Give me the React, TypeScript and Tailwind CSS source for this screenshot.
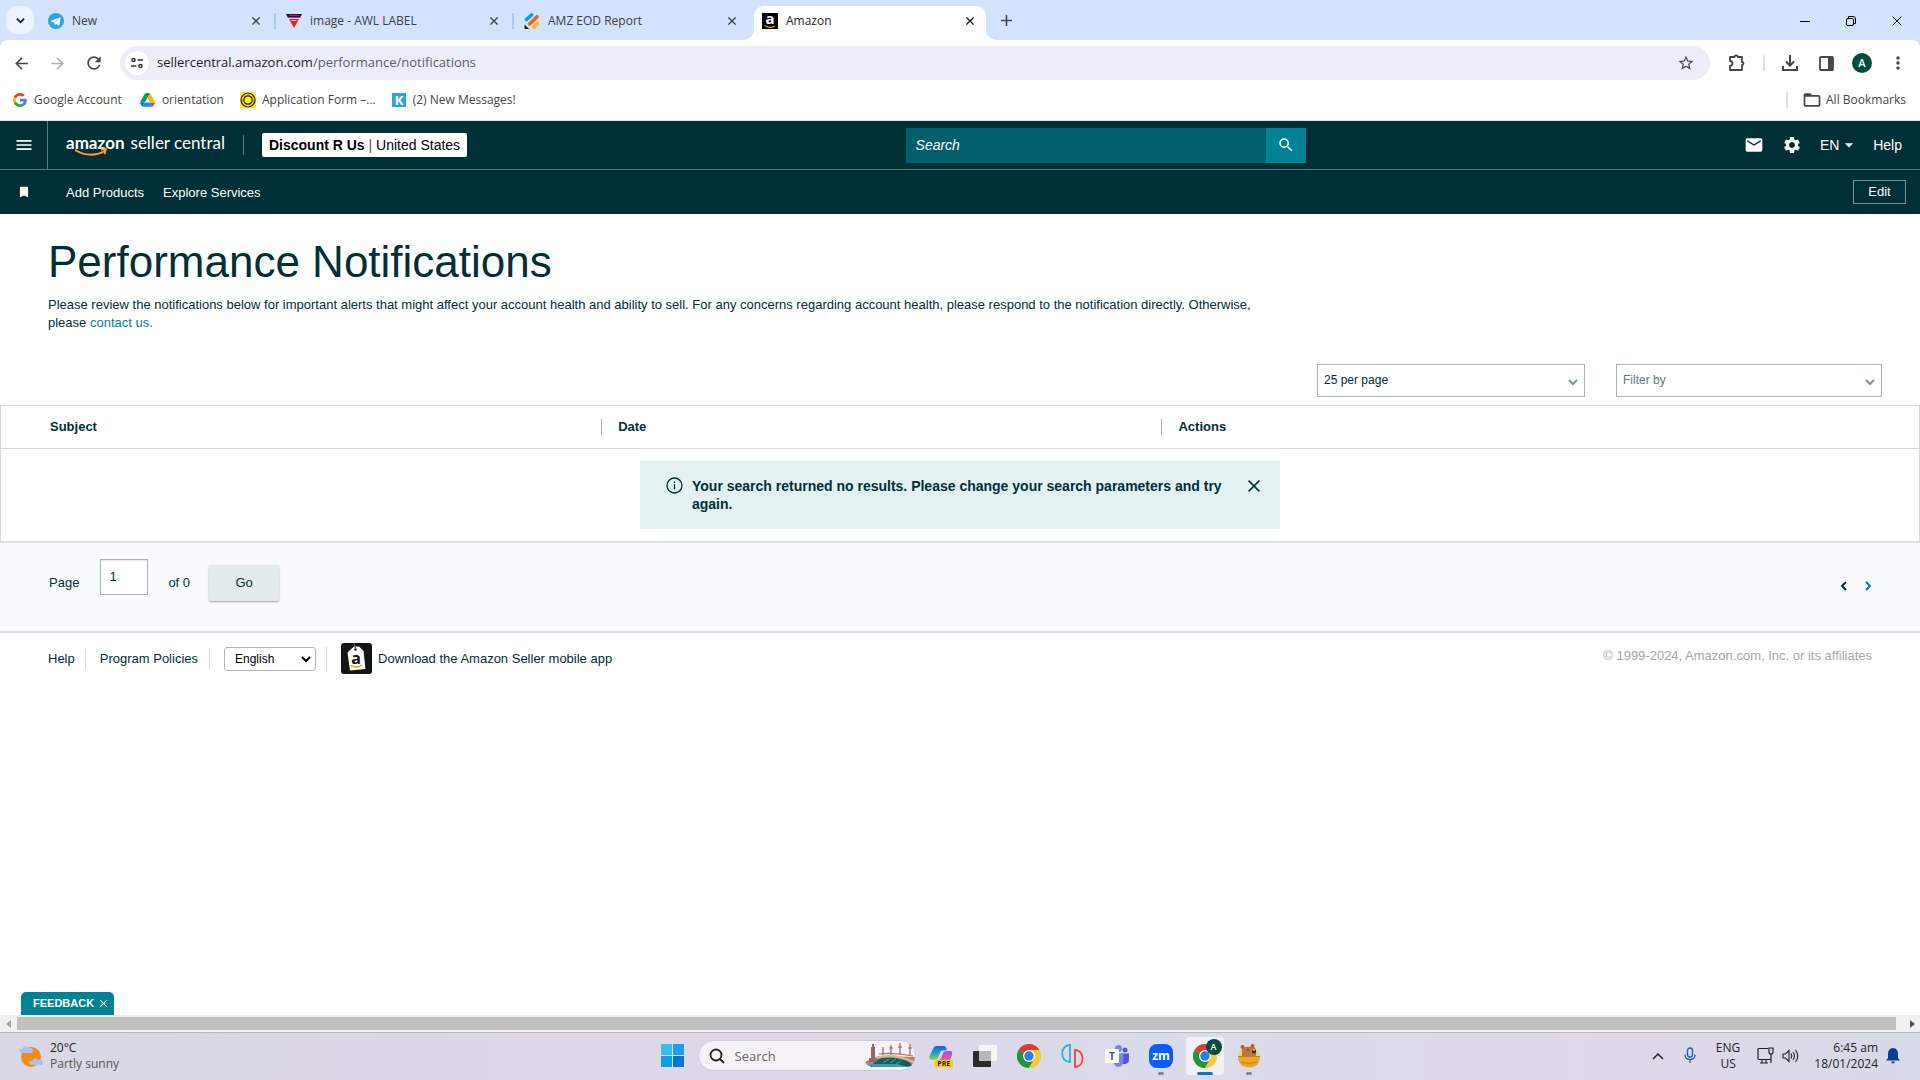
import React from "react";
import {
  MdArrowBack, MdArrowForward, MdRefresh, MdStarBorder, MdOutlineExtension, MdMenu,
  MdMail, MdSettings, MdBookmark, MdSearch, MdFolderOpen, MdMoreVert, MdArrowDropDown,
} from "react-icons/md";

const UI = "font-['Open_Sans','Noto_Sans',sans-serif]";

function Cross({ size = 8, width = 1.6 }: { size?: number; width?: number }) {
  return (
    <svg width={size} height={size} viewBox="0 0 10 10" stroke="currentColor" strokeWidth={width} fill="none">
      <path d="M0.5 0.5 9.5 9.5M9.5 0.5 0.5 9.5" />
    </svg>
  );
}

function Chevron({ className = "", d = "M1 3 5 7 9 3" }: { className?: string; d?: string }) {
  return (
    <svg className={className} width="10" height="10" viewBox="0 0 10 10" fill="none" stroke="currentColor" strokeWidth="2">
      <path d={d} />
    </svg>
  );
}

function TelegramIcon() {
  return (
    <svg width="16" height="16" viewBox="0 0 24 24">
      <circle cx="12" cy="12" r="12" fill="#2ca5e0" />
      <path d="M4.6 11.8 18 6.6c.7-.2 1.2.2 1 1.100l-2.200 10.500c-.2.8-.7 1-1.300.6l-3.500-2.600-1.700 1.700c-.3.3-.6.3-.7-.3l.2-3.100-4.900-1.600c-.7-.2-.7-.8-.3-1.100z" fill="#fff" />
      <path d="m10 14.200 6.200-5.500" stroke="#2ca5e0" strokeWidth="1" />
    </svg>
  );
}

function AwlIcon() {
  return (
    <svg width="16" height="16" viewBox="0 0 16 16">
      <path d="M0 1h16l-2 4H2z" fill="#2b1236" />
      <path d="M3 2.500h10" stroke="#c0205a" strokeWidth="1" />
      <path d="M3 6h10L8 15z" fill="#ec1c24" />
      <path d="M5.500 7.500h5" stroke="#fff" strokeWidth="0.800" />
      <path d="M1 5h14" stroke="#f4b8c0" strokeWidth="0.800" />
    </svg>
  );
}

function JotformIcon() {
  return (
    <svg width="16" height="16" viewBox="0 0 16 16" strokeLinecap="round" fill="none">
      <path d="M2.500 6.500 7.500 2" stroke="#0099ff" strokeWidth="3.600" />
      <path d="M5.500 11 13 3.700" stroke="#ff6100" strokeWidth="3.600" />
      <path d="M10 14 13.700 10.600" stroke="#ffb629" strokeWidth="3.600" />
      <path d="M.5 11.500V15a1 1 0 0 0 1 1H5z" fill="#0a1551" />
    </svg>
  );
}

function AmazonIcon() {
  return (
    <svg className="overflow-visible" width="16" height="16" viewBox="0 0 16 16">
      <rect width="16" height="16" fill="#000" />
      <text x="8" y="11" textAnchor="middle" fontSize="15" fontWeight="700" fill="#fff" fontFamily="Open Sans, sans-serif">a</text>
      <path d="M2.500 12.600Q8 16 13 12.900" fill="none" stroke="#f90" strokeWidth="1.200" />
    </svg>
  );
}

function GoogleIcon() {
  return (
    <svg width="14" height="14" viewBox="0 0 48 48">
      <path fill="#EA4335" d="M24 9.500c3.540 0 6.710 1.220 9.210 3.600l6.850-6.850C35.900 2.380 30.470 0 24 0 14.620 0 6.510 5.380 2.560 13.220l7.980 6.190C12.430 13.720 17.740 9.500 24 9.500z" />
      <path fill="#4285F4" d="M46.980 24.550c0-1.570-.15-3.090-.38-4.550H24v9.020h12.940c-.58 2.960-2.260 5.480-4.780 7.180l7.730 6c4.510-4.180 7.090-10.360 7.090-17.650z" />
      <path fill="#FBBC05" d="M10.530 28.590c-.48-1.450-.76-2.990-.76-4.590s.27-3.140.76-4.590l-7.980-6.190C.92 16.460 0 20.120 0 24c0 3.880.92 7.540 2.560 10.780l7.970-6.190z" />
      <path fill="#34A853" d="M24 48c6.480 0 11.930-2.130 15.890-5.810l-7.730-6c-2.150 1.450-4.920 2.300-8.160 2.300-6.260 0-11.570-4.220-13.470-9.910l-7.980 6.190C6.510 42.620 14.620 48 24 48z" />
    </svg>
  );
}

function DriveIcon() {
  return (
    <svg width="15" height="14" viewBox="0 0 87 78">
      <path fill="#0066da" d="m6.600 66.850 3.850 6.650c.8 1.400 1.950 2.500 3.300 3.300l13.750-23.800H0c0 1.550.4 3.100 1.200 4.500z" />
      <path fill="#00ac47" d="M43.650 25 29.900 1.200c-1.350.8-2.500 1.900-3.300 3.300L1.200 48.500A9 9 0 0 0 0 53h27.500z" />
      <path fill="#ea4335" d="M73.550 76.800c1.350-.8 2.500-1.900 3.300-3.300l1.600-2.750 7.650-13.250c.8-1.400 1.200-2.950 1.200-4.500H59.800l5.850 11.500z" />
      <path fill="#00832d" d="M43.650 25 57.400 1.200C56.050.4 54.500 0 52.900 0H34.400c-1.600 0-3.150.45-4.500 1.200z" />
      <path fill="#2684fc" d="M59.800 53H27.500L13.750 76.800c1.350.8 2.900 1.200 4.500 1.200h50.800c1.600 0 3.150-.45 4.500-1.200z" />
      <path fill="#ffba00" d="M73.400 26.500 60.700 4.500c-.8-1.400-1.950-2.500-3.300-3.300L43.650 25 59.800 53h27.450c0-1.550-.4-3.100-1.200-4.500z" />
    </svg>
  );
}

function SealIcon() {
  return (
    <svg width="16" height="16" viewBox="0 0 16 16" fill="none">
      <rect width="16" height="16" fill="#fdf01c" />
      <circle cx="8" cy="8" r="7" stroke="#222" strokeWidth="1.200" />
      <circle cx="8" cy="8" r="4.200" stroke="#222" strokeWidth="1.200" />
      <circle cx="8" cy="8" r="5.600" stroke="#c97b3a" strokeWidth="0.800" strokeDasharray="3 2" />
    </svg>
  );
}

function KIcon() {
  return (
    <svg className="overflow-visible" width="14" height="14" viewBox="0 0 14 14">
      <rect width="14" height="14" fill="#2fa3dd" />
      <text x="7" y="12" textAnchor="middle" fontSize="13" fontWeight="700" fill="#fff" fontFamily="Open Sans, sans-serif">K</text>
    </svg>
  );
}

const tabs = [
  { title: "New", icon: <TelegramIcon />, active: false },
  { title: "image - AWL LABEL", icon: <AwlIcon />, active: false },
  { title: "AMZ EOD Report", icon: <JotformIcon />, active: false },
  { title: "Amazon", icon: <AmazonIcon />, active: true },
];

function TabStrip() {
  return (
    <div className="flex h-10 items-end bg-[#d3e3fd] pl-1.5 text-[12px] text-[#3c4043]">
      <button aria-label="Search tabs" className="mb-1.5 flex size-7 items-center justify-center rounded-[10px] bg-[#ecf2fe] text-[#1f1f1f]">
        <Chevron className="size-[9px]" />
      </button>
      <div role="tablist" className="ml-1.5 flex">
        {tabs.map((t, i) => (
          <div
            key={t.title}
            className={
              t.active
                ? "relative flex h-[34px] w-[232px] items-center rounded-t-[10px] bg-white pr-3 pl-2 text-[#1f1f1f]"
                : "flex h-[34px] w-[238px] items-center pr-0.5 pl-2"
            }
          >
            {t.active && (
              <>
                <svg className="absolute bottom-0 -left-[10px]" width="10" height="10" viewBox="0 0 10 10"><path d="M10 0v10H0A10 10 0 0 0 10 0z" fill="#fff" /></svg>
                <svg className="absolute -right-[10px] bottom-0" width="10" height="10" viewBox="0 0 10 10"><path d="M0 0v10h10A10 10 0 0 1 0 0z" fill="#fff" /></svg>
              </>
            )}
            <button role="tab" aria-selected={t.active} className="flex flex-1 items-center gap-2 pb-1 text-left">
              {t.icon}
              <span>{t.title}</span>
            </button>
            <button aria-label={`Close ${t.title}`} className={t.active ? "pb-1" : "pr-3.5 pb-1"}><Cross /></button>
            {!t.active && <span className={i < 2 ? "mb-1 h-4 w-0.5 bg-[#a8c7fa]" : "w-0.5"} />}
          </div>
        ))}
      </div>
      <button aria-label="New tab" className="mb-3.5 ml-[15px] text-[#474747]">
        <svg width="11" height="11" viewBox="0 0 11 11" stroke="currentColor" strokeWidth="1.600"><path d="M5.500 0v11M0 5.500h11" /></svg>
      </button>
      <div className="mb-3.5 ml-auto flex items-center gap-9 pr-[18px] text-black">
        <button aria-label="Minimize"><svg width="10" height="10" viewBox="0 0 10 10" stroke="currentColor"><path d="M0 5.500h10" /></svg></button>
        <button aria-label="Restore">
          <svg width="10" height="10" viewBox="0 0 10 10" fill="none" stroke="currentColor"><rect x="0.500" y="2.500" width="7" height="7" rx="1.500" /><path d="M2.500 2V.5H7A2.500 2.500 0 0 1 9.500 3v4.500H8" /></svg>
        </button>
        <button aria-label="Close window"><Cross size={10} width={1} /></button>
      </div>
    </div>
  );
}

function ExtensionIcon() {
  return (
    <svg width="18" height="18" viewBox="0 0 18 18" fill="none" stroke="currentColor" strokeWidth="1.800" strokeLinejoin="round">
      <path d="M2 3h4.500a1.600 1.600 0 0 1 3.200 0H14v5a1.500 1.500 0 0 1 0 3v5H2v-4q2.500-.3 2.500-2.500T2 7z" />
    </svg>
  );
}

function Toolbar() {
  return (
    <div className="bg-[#d3e3fd]">
      <div className="flex items-center rounded-t-[8px] bg-white pt-1.5 pr-3 pl-3 text-[#474747]">
        <button aria-label="Back"><MdArrowBack size={19} /></button>
        <button aria-label="Forward" className="ml-[17px] text-[#b0b0b0]"><MdArrowForward size={19} /></button>
        <button aria-label="Reload" className="ml-[17px]"><MdRefresh size={20} /></button>
        <div className="ml-4 flex h-[34px] flex-1 items-center rounded-full bg-[#ebeef8] pr-[15px] pl-[5px]">
          <button aria-label="Site information" className="flex size-6 items-center justify-center rounded-full bg-white">
            <svg width="12" height="12" viewBox="0 0 12 12" fill="none" stroke="#333" strokeWidth="1.500">
              <circle cx="2.500" cy="3" r="1.600" /><path d="M6.500 3H12M0 9h5.500" /><circle cx="9.500" cy="9" r="1.600" />
            </svg>
          </button>
          <div role="textbox" aria-label="Address" className="ml-2 flex-1 text-[13px] text-[#5a5e66]">
            <span className="text-[#1f1f1f]">sellercentral.amazon.com</span>/performance/notifications
          </div>
          <button aria-label="Bookmark this tab"><MdStarBorder size={18} /></button>
        </div>
        <button aria-label="Extensions" className="ml-[18px]"><ExtensionIcon /></button>
        <span className="mx-[17px] h-4 w-0.5 bg-[#d3e3fd]" />
        <button aria-label="Downloads">
          <svg width="16" height="16" viewBox="0 0 16 16" fill="none" stroke="currentColor" strokeWidth="2"><path d="M8 0v10M4 6.500 8 10.500 12 6.500M1 11v4h14v-4" /></svg>
        </button>
        <button aria-label="Side panel" className="ml-[21px]">
          <svg width="15" height="15" viewBox="0 0 15 15"><rect x="1" y="1" width="13" height="13" rx="1" fill="none" stroke="currentColor" strokeWidth="1.800" /><path d="M9 1h5v13H9z" fill="currentColor" /></svg>
        </button>
        <button aria-label="Profile" className="ml-[18px] flex size-5 items-center justify-center rounded-full bg-[#004d40] text-[11px] font-semibold text-white">A</button>
        <button aria-label="Menu" className="ml-4"><MdMoreVert size={20} /></button>
      </div>
    </div>
  );
}

function Bookmarks() {
  return (
    <nav aria-label="Bookmarks" className="flex h-[41px] items-center border-b border-[#dfe1e5] bg-white pr-3.5 pl-[13px] text-[12px] text-[#474747]">
      <a href="#google" className="flex items-center gap-[7px]"><GoogleIcon />Google Account</a>
      <a href="#orientation" className="ml-[18px] flex items-center gap-[7px]"><DriveIcon />orientation</a>
      <a href="#form" className="ml-4 flex items-center gap-1.5"><SealIcon />Application Form –...</a>
      <a href="#messages" className="ml-4 flex items-center gap-[7px]"><KIcon />(2) New Messages!</a>
      <span className="ml-auto h-4 w-0.5 bg-[#d3e3fd]" />
      <button className="ml-3.5 flex items-center gap-1"><MdFolderOpen size={20} />All Bookmarks</button>
    </nav>
  );
}

function SellerHeader() {
  return (
    <header className="bg-[#002f36] text-[14px] text-white">
      <div className="flex h-[49px] items-center border-b border-[#5e7a7e]">
        <button aria-label="Open menu" className="flex w-12 items-center justify-center self-stretch border-r border-[#5e7a7e]"><MdMenu size={20} /></button>
        <a href="#home" className="relative ml-[18px] flex items-baseline gap-1.5 pb-1 font-['Lato',sans-serif] text-[17px] leading-5">
          <span className="font-bold">amazon</span>
          <span>seller central</span>
          <svg className="absolute top-[15px] left-2" width="34" height="9" viewBox="0 0 34 9" fill="none" stroke="#ff9f2e" strokeWidth="1.800"><path d="M1 2Q16 11 31 3M27 1.500l5-.3-1.500 5" /></svg>
        </a>
        <span className="ml-[18px] h-5 w-px bg-[#5e7a7e]" />
        <button className="ml-[18px] h-6 rounded-[2px] bg-white px-[7px] text-black"><b>Discount R Us</b> <span className="text-[#555]">|</span> United States</button>
        <form className="mx-auto flex h-[35px] w-[400px]" onSubmit={(e) => e.preventDefault()}>
          <input aria-label="Search" placeholder="Search" className="min-w-0 flex-1 bg-[#005f6b] px-2.5 italic placeholder:text-white" />
          <button aria-label="Submit search" className="flex w-10 items-center justify-center bg-[#008296]"><MdSearch size={18} /></button>
        </form>
        <div className="flex w-[176px] items-center pr-[18px]">
          <button aria-label="Messages"><MdMail size={20} /></button>
          <button aria-label="Settings" className="ml-[18px]"><MdSettings size={20} /></button>
          <button className="ml-[18px] flex items-center">EN<MdArrowDropDown size={20} /></button>
          <a href="#help" className="ml-auto">Help</a>
        </div>
      </div>
      <div className="flex h-11 items-center pr-3.5 text-[13px]">
        <button aria-label="Bookmarks" className="flex w-12 justify-center"><MdBookmark size={14} /></button>
        <a href="#add" className="ml-[18px] pt-0.5 font-medium">Add Products</a>
        <a href="#explore" className="ml-[19px] pt-0.5 font-medium">Explore Services</a>
        <button className="ml-auto h-6 w-[53px] border border-[#7d9295]">Edit</button>
      </div>
    </header>
  );
}

function Filters() {
  return (
    <div className="mt-8 flex justify-end gap-[31px] pr-[38px] text-[12px]">
      <label className="relative w-[268px]">
        <select aria-label="Results per page" className="h-[33px] w-full appearance-none border border-[#a3b5b6] bg-white px-1.5 pb-0.5"><option>25 per page</option></select>
        <Chevron className="pointer-events-none absolute top-[13px] right-[7px] text-[#7f9495]" />
      </label>
      <label className="relative w-[266px]">
        <select aria-label="Filter by" className="h-[33px] w-full appearance-none border border-[#a3b5b6] bg-white px-1.5 pb-0.5 text-[#667779]"><option>Filter by</option></select>
        <Chevron className="pointer-events-none absolute top-[13px] right-[7px] text-[#7f9495]" />
      </label>
    </div>
  );
}

function Notifications() {
  return (
    <table className="mt-2 w-full border border-b-0 border-[#d5dbdb] text-[13px]">
      <thead>
        <tr className="h-[43px] border-b border-[#d5dbdb] text-left">
          <th className="w-[31.3%] pl-[49px]">Subject</th>
          <th className="w-[29.2%]"><div className="border-l border-[#a3b5b6] pl-4 leading-4">Date</div></th>
          <th><div className="border-l border-[#a3b5b6] pl-4 leading-4">Actions</div></th>
        </tr>
      </thead>
      <tbody>
        <tr>
          <td colSpan={3} className="py-3">
            <div role="status" className="mx-auto flex w-[640px] items-start bg-[#e3f1f3] pt-4 pr-[20px] pb-4 pl-[26px]">
              <svg className="shrink-0" width="17" height="17" viewBox="0 0 17 17" fill="none" stroke="#002f36" strokeWidth="1.300"><circle cx="8.500" cy="8.500" r="7.500" /><path d="M8.500 7.200v5M8.500 4.500v1.400" /></svg>
              <p className="ml-[9px] flex-1 text-[14px] leading-[18px] font-bold">Your search returned no results. Please change your search parameters and try again.</p>
              <button aria-label="Dismiss" className="mt-[3px]"><Cross size={12} width={1.300} /></button>
            </div>
          </td>
        </tr>
      </tbody>
    </table>
  );
}

function Pager() {
  return (
    <div className="flex items-center border-y-2 border-[#dbdfe3] bg-[#f9fafc] pt-4 pr-[47px] pb-7 pl-[49px] text-[13px]">
      <label htmlFor="page" className="pt-1">Page</label>
      <input id="page" defaultValue="1" className="mr-5 mb-2 ml-[21px] h-9 w-12 border border-[#a3b5b6] bg-white px-2 pb-0.5 shadow-[inset_0_1px_2px_rgba(0,0,0,0.1)]" />
      <span className="pt-1">of 0</span>
      <button className="mt-1 ml-[19px] h-9 w-[70px] rounded-[2px] bg-[#e3eaeb] shadow-[0_1px_2px_rgba(0,0,0,0.35)]">Go</button>
      <div className="ml-auto flex gap-3.5 pt-2.5">
        <button aria-label="Previous page"><Chevron d="M7 1 3 5 7 9" /></button>
        <button aria-label="Next page" className="text-[#008296]"><Chevron d="M3 1 7 5 3 9" /></button>
      </div>
    </div>
  );
}

function Footer() {
  return (
    <footer className="flex items-center pt-2.5 pr-12 pl-12 text-[13px]">
      <a href="#help">Help</a>
      <span className="ml-2.5 h-5 w-px bg-[#d5dbdb]" />
      <a href="#policies" className="ml-3.5">Program Policies</a>
      <span className="ml-[11px] h-5 w-px bg-[#d5dbdb]" />
      <label className="relative ml-3.5 w-[92px]">
        <select aria-label="Language" className="h-6 w-full appearance-none rounded-[3px] border border-[#b5b5b5] bg-white pl-2.5 text-[12px] text-black"><option>English</option></select>
        <Chevron className="pointer-events-none absolute top-[7px] right-[5px] text-black" />
      </label>
      <span className="ml-2.5 h-6 w-px bg-[#d5dbdb]" />
      <a href="#app" className="ml-3.5 flex items-center gap-1.5">
        <svg width="31" height="31" viewBox="0 0 31 31">
          <rect width="31" height="31" rx="3" fill="#151515" />
          <path d="m8 8 5-4.500h5L22.500 8l2 18L9 27.500 6.500 10z" fill="#fff" />
          <circle cx="14.500" cy="6.500" r="1.200" fill="#151515" />
          <path d="M14.500 6 13 0" stroke="#555" />
          <text x="15" y="21" textAnchor="middle" fontSize="16" fontWeight="700" fontFamily="Open Sans, sans-serif" fill="#111">a</text>
          <path d="M10 22.500q6 3.500 11-.8" fill="none" stroke="#f90" strokeWidth="1.400" />
        </svg>
        Download the Amazon Seller mobile app
      </a>
      <span className="ml-auto pb-1.5 text-[#a7a7a7]">© 1999-2024, Amazon.com, Inc. or its affiliates</span>
    </footer>
  );
}

function ChromeIcon() {
  return (
    <svg width="24" height="24" viewBox="0 0 48 48">
      <circle cx="24" cy="24" r="24" fill="#fbc116" />
      <path d="M24 24 3.200 12A24 24 0 0 1 44.800 12z" fill="#e33b2e" />
      <path d="M3.200 12A24 24 0 0 0 24 48l10.400-18L24 24z" fill="#229342" />
      <path d="M24 12h20.800A24 24 0 0 1 24 48l10.400-18z" fill="#fcc934" />
      <circle cx="24" cy="24" r="12" fill="#fff" />
      <circle cx="24" cy="24" r="9.500" fill="#2f7de9" />
    </svg>
  );
}

function BridgePicture() {
  return (
    <svg width="50" height="26" viewBox="0 0 50 26" fill="none">
      <path d="M0 19q10-6 20-6l30 1q-1 9-9 10H8q-6-1-8-5z" fill="#a58478" />
      <path d="M5 24q10-13 24-10 12 1 18 8-2 2-6 2z" fill="#1c5a5f" />
      <path d="M2 21h30l12 3H8q-4-1-6-3z" fill="#2fa3b5" />
      <path d="m18 20 6-4M25 20l6-4M31 21l5-3" stroke="#2fb39c" />
      <path d="M10 15q18-5 39 4" stroke="#d9b38c" strokeWidth="2.500" />
      <path d="M14 11q16-2 34 2" stroke="#a07c6c" strokeWidth="1.200" />
      <path d="M6 4h4v12H6zM7 1h2v3H7zM4 15h8v4H4z" fill="#8d6a62" />
      <path d="M18 6v6M26 3v9M35 2v9M45 3v9M24 5h4M33 4h4M43 5h4" stroke="#8a655c" strokeWidth="1.200" />
      <path d="M17 5h2M25 3h2M34 1h2M44 2h2" stroke="#e0a24c" strokeWidth="2" />
    </svg>
  );
}

const apps = [
  {
    name: "Copilot", mark: "",
    icon: (
      <svg width="24" height="24" viewBox="0 0 24 24">
        <defs>
          <linearGradient id="cl" x1="0" y1="0" x2="0" y2="1"><stop stopColor="#1d5fd6" /><stop offset="0.500" stopColor="#1aa6c9" /><stop offset="1" stopColor="#a5cf3c" /></linearGradient>
          <linearGradient id="cr" x1="0" y1="0" x2="0" y2="1"><stop stopColor="#a44de0" /><stop offset="1" stopColor="#f0628a" /></linearGradient>
        </defs>
        <path d="M7 2h8q2 0 3 4l-6 1-3 7q-1 2-3 2H2q-3-1-1-5L4 5q1-3 3-3z" fill="url(#cl)" />
        <path d="M17 7h4q3 0 2 4l-2 5H9q2 0 3-2l2-5q1-2 3-2z" fill="url(#cr)" />
        <rect x="5.500" y="16" width="18.500" height="7.500" rx="1.500" fill="#ffc914" />
        <text x="14.800" y="22.300" textAnchor="middle" fontSize="7" fontWeight="700" fontFamily="Open Sans, sans-serif" fill="#222">PRE</text>
      </svg>
    ),
  },
  {
    name: "Task View", mark: "",
    icon: (
      <svg width="24" height="24" viewBox="0 0 24 24">
        <rect x="0" y="7" width="18" height="16" rx="1" fill="#2b2b2b" />
        <rect x="6" y="1" width="18" height="16" rx="1" fill="#f6f6f6" />
        <path d="M6 7h12v10H6z" fill="#b9b9b9" />
      </svg>
    ),
  },
  { name: "Chrome", mark: "", icon: <ChromeIcon /> },
  {
    name: "Workspace", mark: "",
    icon: (
      <svg width="24" height="24" viewBox="0 0 24 24" fill="none" strokeWidth="1.800">
        <path d="M9 1v17C4 18 1.200 14 1.200 9.500S4 1 9 1z" stroke="#25b4e6" />
        <path d="M14 6v17c5 0 7.500-4 7.500-8.500S19 6 14 6z" stroke="#f0443c" />
      </svg>
    ),
  },
  {
    name: "Teams", mark: "",
    icon: (
      <svg width="24" height="24" viewBox="0 0 24 24">
        <circle cx="20" cy="6" r="2.500" fill="#5059c9" /><path d="M16 9.500h8V16q0 3-4 4h-4z" fill="#5059c9" />
        <circle cx="13.500" cy="4.500" r="3.500" fill="#7b83eb" /><path d="M9 9.500h9.500V18q-1 4.500-5 5-3 0-4.500-3z" fill="#7b83eb" />
        <rect x="0" y="5" width="14" height="14" fill="#fff" />
        <text x="7" y="16" textAnchor="middle" fontSize="11" fontWeight="700" fontFamily="Open Sans, sans-serif" fill="#4b53bc">T</text>
      </svg>
    ),
  },
  {
    name: "Zoom", mark: "idle",
    icon: (
      <svg width="24" height="24" viewBox="0 0 24 24">
        <rect width="24" height="24" rx="8" fill="#0b5cff" />
        <text x="12" y="16" textAnchor="middle" fontSize="12" fontWeight="700" fontFamily="Open Sans, sans-serif" fill="#fff">zm</text>
      </svg>
    ),
  },
  { name: "Chrome window", mark: "active", icon: <ChromeIcon /> },
  {
    name: "Bear", mark: "idle",
    icon: (
      <svg width="24" height="24" viewBox="0 0 24 24">
        <circle cx="12" cy="12.500" r="10.500" fill="#d5dd72" />
        <path d="M5 12V5q0-2 2-2h9q3 0 3 4v6z" fill="#b9773c" />
        <circle cx="5.500" cy="3" r="2" fill="#a8662f" /><circle cx="15.500" cy="2" r="2" fill="#a8662f" />
        <circle cx="17" cy="7.500" r="2" fill="#3a2016" /><path d="M16 6h2" stroke="#fff" /><circle cx="11" cy="6" r="0.800" fill="#222" />
        <path d="M1 12h22q0 11-11 11.500Q1 23 1 12z" fill="#e9a82b" /><path d="M1 12.500h22M4 18q8 3 16 0" stroke="#c07f1c" fill="none" />
      </svg>
    ),
  },
];

function Taskbar() {
  return (
    <div className="flex h-12 items-center border-t border-[#b9b7c3] bg-[linear-gradient(90deg,#d9d8e4,#dfd7e9_40%,#dadbea_60%,#dfd8e8_85%,#d7dae8)] pb-0.5 text-[12px] leading-4 text-[#222]">
      <div className="flex flex-1 items-center gap-[7px] pl-[19px]">
        <svg width="24" height="24" viewBox="0 0 24 24">
          <circle cx="12" cy="13" r="10" fill="#f28b1c" />
          <path d="M2 9q-3-1-1-4h2Q5 .5 9 4q5-1 5 3 0 2-2 2z" fill="#a9c3ef" />
          <path d="M12 21q-3-1-1-4h2q3-5 6-1 5-1 5 3 0 2-2 2z" fill="#a9c3ef" />
        </svg>
        <div><div>20°C</div><div className="text-[#555]">Partly sunny</div></div>
      </div>
      <div className="flex items-center pl-[9px]">
        <button aria-label="Start" className="grid size-[23px] grid-cols-2 gap-px">
          <span className="bg-[#36bdf4]" /><span className="bg-[#1a9fe8]" /><span className="bg-[#149be6]" /><span className="bg-[#0078d4]" />
        </button>
        <label className="ml-3.5 flex h-[31px] w-[218px] items-center rounded-full border border-[#cfc9da] bg-[#f5f3f9] pl-2.5">
          <svg width="16" height="16" viewBox="0 0 16 16" fill="none" stroke="#222" strokeWidth="1.800"><circle cx="7" cy="7" r="5.500" /><path d="m11 11 4 4" /></svg>
          <input aria-label="Search Windows" placeholder="Search" className="ml-2.5 w-0 flex-1 text-[13px] placeholder:text-[#666]" />
          <BridgePicture />
        </label>
        <div className="ml-1.5 flex gap-1.5">
          {apps.map((a) => (
            <button
              key={a.name}
              aria-label={a.name}
              className={a.mark === "active" ? "relative flex h-[38px] w-[38px] items-center justify-center rounded bg-[#f1f0f7]" : "relative flex h-[38px] w-[38px] items-center justify-center"}
            >
              {a.icon}
              {a.mark === "active" && (
                <>
                  <span className="absolute top-0.5 right-0.5 flex size-4 items-center justify-center rounded-full bg-[#004d40] text-[9px] font-semibold text-white">A</span>
                  <span className="absolute bottom-0 left-[11px] h-[3px] w-4 rounded-full bg-[#0078d4]" />
                </>
              )}
              {a.mark === "idle" && <span className="absolute bottom-0 left-4 h-[3px] w-1.5 rounded-full bg-[#858292]" />}
            </button>
          ))}
        </div>
      </div>
      <div className="flex flex-1 items-center justify-end pr-5">
        <button aria-label="Show hidden icons"><svg width="12" height="8" viewBox="0 0 12 8" fill="none" stroke="#222" strokeWidth="1.500"><path d="m1 7 5-5 5 5" /></svg></button>
        <svg className="ml-5" width="12" height="17" viewBox="0 0 12 17" fill="none" stroke="#1d5fb4" strokeWidth="1.300"><rect x="3.500" y="1" width="5" height="9" rx="2.500" /><path d="M1 7.500q0 5 5 5t5-5M6 12.500V16" /></svg>
        <div className="ml-5 text-center"><div>ENG</div><div>US</div></div>
        <svg className="ml-[17px]" width="17" height="17" viewBox="0 0 17 17" fill="none" stroke="#222" strokeWidth="1.200"><path d="M11 1.500H2Q1 1.500 1 2.500v9q0 1 1 1h12M5 12.500V16M9 12.500V16M3 16h8M12 1h4v4q0 2-2 2t-2-2zM14 7v9" /></svg>
        <svg className="ml-2" width="17" height="14" viewBox="0 0 17 14" fill="none" stroke="#222" strokeWidth="1.100"><path d="M1 5h2.500L7 1.500v11L3.500 9H1zM9 4.500q1.500 2.500 0 5M11 3q3 4 0 8M13.500 1q4.500 6 0 12" /></svg>
        <div className="ml-[15px] text-right"><div>6:45 am</div><div>18/01/2024</div></div>
        <svg className="ml-2" width="14" height="16" viewBox="0 0 14 16" fill="#0b3f94"><path d="M7 0Q2 .5 2 6v4L0 12.500h14L12 10V6Q12 .5 7 0zM5 13.500h4Q8.500 15.500 7 15.500t-2-2z" /></svg>
      </div>
    </div>
  );
}

export default function App() {
  return (
    <div className="flex min-h-screen flex-col bg-white">
      <div className={UI}>
        <TabStrip />
        <Toolbar />
        <Bookmarks />
      </div>
      <div className="flex flex-1 flex-col font-['Liberation_Sans',sans-serif] text-[#002f36]">
        <SellerHeader />
        <main>
          <div className="max-w-[1320px] px-12 pt-5">
            <h1 className="text-[44px] leading-[56px]">Performance Notifications</h1>
            <p className="mt-1.5 text-[13px] leading-[18px]">
              Please review the notifications below for important alerts that might affect your account health and ability to sell. For any concerns regarding account health, please respond to the notification directly. Otherwise, please <a href="#contact" className="text-[#008296]">contact us.</a>
            </p>
          </div>
          <Filters />
          <Notifications />
          <Pager />
        </main>
        <Footer />
        <div className="mt-auto pl-[21px]">
          <button className="flex h-[23px] items-center gap-1.5 rounded-t-[5px] bg-[#008296] pr-[7px] pl-3 text-[11px] font-bold text-white">FEEDBACK <Cross size={7} width={1.500} /></button>
        </div>
      </div>
      <div className="flex h-[17px] items-center bg-[#f1f1f1] py-0.5">
        <svg className="mx-1.5" width="5" height="8" viewBox="0 0 5 8" fill="#a3a3a3"><path d="M5 0v8L0 4z" /></svg>
        <span className="h-[13px] flex-1 bg-[#c1c1c1]" />
        <svg className="mr-[5px] ml-3.5" width="5" height="8" viewBox="0 0 5 8" fill="#505050"><path d="M0 0v8l5-4z" /></svg>
      </div>
      <div className={UI}><Taskbar /></div>
    </div>
  );
}
